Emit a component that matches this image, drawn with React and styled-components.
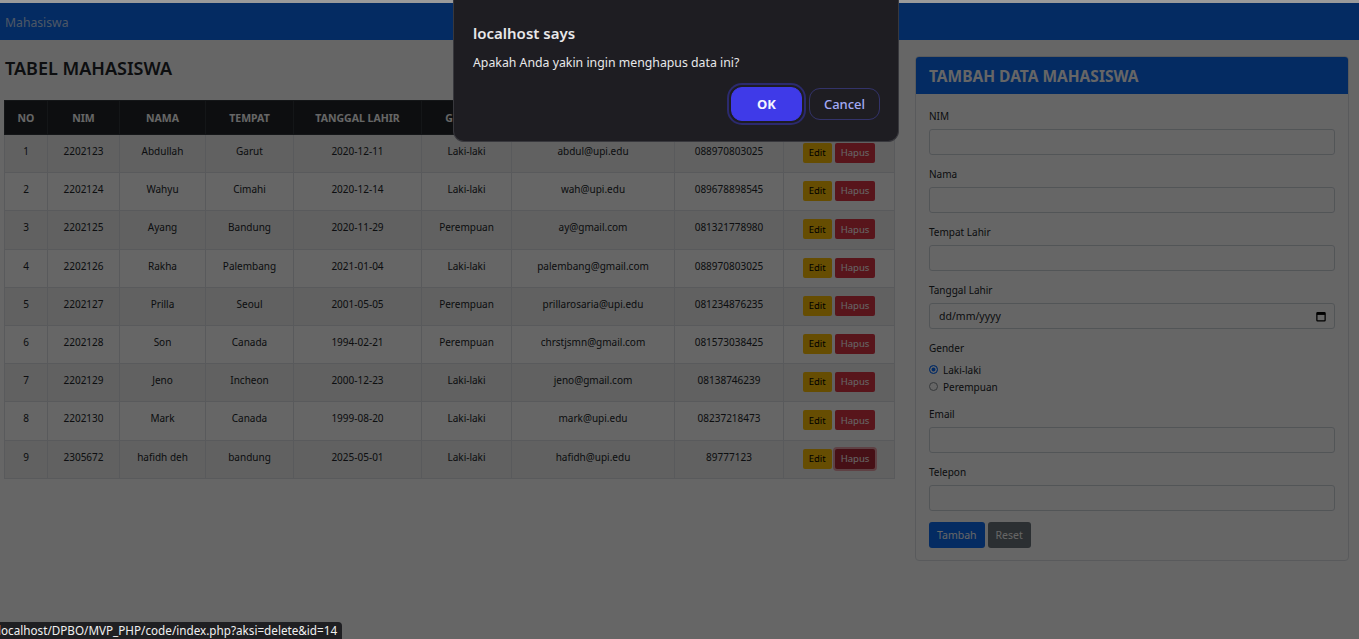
import React from 'react';
import styled, { createGlobalStyle } from 'styled-components';

const GlobalStyle = createGlobalStyle`
  html, body {
    margin: 0;
    padding: 0;
    background: #fff;
    font-family: "Noto Sans", "Open Sans", sans-serif;
    overflow: hidden;
  }
`;

const Page = styled.div`
  position: relative;
  width: 1359px;
  height: 639px;
  background: #fff;
  border-top: 3px solid #9a9a9a;
  box-sizing: border-box;
`;

const Navbar = styled.div`
  height: 37px;
  background: #0a6bf5;
  display: flex;
  align-items: center;
  padding-left: 5px;
`;

const Brand = styled.span`
  color: rgba(255, 255, 255, 0.75);
  font-size: 12.2px;
  margin-top: 2px;
`;

const Main = styled.div`
  display: flex;
  align-items: flex-start;
  padding: 0 10px 0 4px;
  gap: 21px;
`;

const LeftCol = styled.div`
  width: 890px;
`;

const Title = styled.h2`
  margin: 16px 0 0 1px;
  font-size: 18px;
  font-weight: 600;
  color: #212529;
  height: 44px;
  line-height: 24px;
`;

const Table = styled.table`
  width: 891px;
  border-collapse: collapse;
  table-layout: fixed;
  font-size: 10px;
`;

const Th = styled.th`
  width: ${p => p.w - 1}px;
  height: 33px;
  background: #212529;
  color: #fff;
  font-weight: 700;
  font-size: 10.5px;
  border: 1px solid #32383e;
  text-align: center;
  padding: 0;
`;

const Tr = styled.tr`
  background: ${p => (p.odd ? '#f2f2f2' : '#fff')};
`;

const Td = styled.td`
  height: 29.2px;
  border: 1px solid #dee2e6;
  text-align: center;
  color: #212529;
  padding: 8px 0 0;
  vertical-align: top;
  line-height: 16px;
`;

const Actions = styled.div`
  display: flex;
  justify-content: center;
  gap: 3px;
`;

const SmallBtn = styled.span`
  display: inline-flex;
  align-items: center;
  justify-content: center;
  height: 20px;
  padding: 0 6px;
  border-radius: 2px;
  font-size: 9.5px;
  line-height: 1;
  background: ${p => (p.kind === 'edit' ? '#ffc107' : p.active ? '#b02a37' : '#dc3545')};
  color: ${p => (p.kind === 'edit' ? '#000' : '#fff')};
  box-shadow: ${p => (p.active ? '0 0 0 2px rgba(225, 83, 97, 0.5)' : 'none')};
`;

const Card = styled.div`
  width: 434px;
  margin-top: 16px;
  border: 1px solid #dee2e6;
  border-radius: 4px;
  overflow: hidden;
`;

const CardHeader = styled.div`
  height: 37px;
  background: #0a6bf5;
  display: flex;
  align-items: center;
  padding-left: 13px;
  color: #fff;
  font-weight: 700;
  font-size: 15.5px;
`;

const CardBody = styled.div`
  padding: 14px 13px 12px 13px;
`;

const Group = styled.div`
  margin-bottom: 11px;
`;

const Label = styled.div`
  font-size: 10px;
  color: #212529;
  margin-bottom: 5px;
  line-height: 16px;
`;

const Input = styled.div`
  height: 24px;
  border: 1px solid #ced4da;
  border-radius: 3px;
  display: flex;
  align-items: center;
  justify-content: space-between;
  padding: 0 8px 0 9px;
  color: #212529;
  font-size: 10.5px;
`;

const RadioRow = styled.div`
  display: flex;
  align-items: center;
  gap: 5px;
  font-size: 10px;
  color: #212529;
  height: 17px;
`;

const Radio = styled.span`
  width: 7px;
  height: 7px;
  border-radius: 50%;
  border: 1px solid ${p => (p.checked ? '#0d6efd' : '#8a8f94')};
  background: ${p => (p.checked ? '#0d6efd' : '#fff')};
  box-shadow: ${p => (p.checked ? 'inset 0 0 0 1.5px #fff' : 'none')};
`;

const BtnRow = styled.div`
  display: flex;
  gap: 3px;
`;

const FormBtn = styled.span`
  height: 26px;
  padding: 0 8px;
  display: inline-flex;
  align-items: center;
  border-radius: 3px;
  font-size: 10.5px;
  background: ${p => (p.primary ? '#0a6bf5' : '#6c757d')};
  color: #fff;
`;

const Overlay = styled.div`
  position: absolute;
  inset: 0;
  background: rgba(0, 0, 0, 0.6);
`;

const Dialog = styled.div`
  position: absolute;
  left: 453px;
  top: -3px;
  width: 446px;
  height: 142px;
  background: #1e1d22;
  border: 1px solid #38383d;
  border-top: none;
  border-radius: 0 0 11px 11px;
  box-sizing: border-box;
  padding: 22px 18px 0 19px;
`;

const DialogTitle = styled.div`
  color: #e8e8ea;
  font-size: 15px;
  font-weight: 600;
  margin-top: 1px;
`;

const DialogText = styled.div`
  color: #e8e8ea;
  font-size: 12.3px;
  margin-top: 11px;
`;

const DialogActions = styled.div`
  display: flex;
  justify-content: flex-end;
  gap: 7px;
  margin-top: 16px;
`;

const DialogBtn = styled.span`
  height: ${p => (p.primary ? 32 : 30)}px;
  width: 69px;
  border-radius: 11px;
  display: inline-flex;
  align-items: center;
  justify-content: center;
  font-size: 13px;
  font-weight: ${p => (p.primary ? 700 : 500)};
  color: ${p => (p.primary ? '#f4f4ff' : '#a3aaf5')};
  background: ${p => (p.primary ? '#3f3ae8' : 'transparent')};
  border: 1px solid ${p => (p.primary ? '#3f3ae8' : '#33336a')};
  box-shadow: ${p => (p.primary ? '0 0 0 2px #1e1d22, 0 0 0 4px #2b2a6e' : 'none')};
  margin-top: ${p => (p.primary ? 0 : 1)}px;
`;

const StatusBar = styled.div`
  position: absolute;
  left: -2px;
  bottom: 0;
  height: 17px;
  padding: 0 5px 0 0;
  background: #1f1f22;
  border-top-right-radius: 4px;
  color: #f0f0f0;
  font-size: 11.7px;
  line-height: 17px;
`;

const columns = [
  ['NO', 43], ['NIM', 72], ['NAMA', 86], ['TEMPAT', 88], ['TANGGAL LAHIR', 128],
  ['GENDER', 90], ['EMAIL', 163], ['TELEPON', 109], ['AKSI', 111],
];

const rows = [
  ['2202123', 'Abdullah', 'Garut', '2020-12-11', 'Laki-laki', 'abdul@upi.edu', '088970803025'],
  ['2202124', 'Wahyu', 'Cimahi', '2020-12-14', 'Laki-laki', 'wah@upi.edu', '089678898545'],
  ['2202125', 'Ayang', 'Bandung', '2020-11-29', 'Perempuan', 'ay@gmail.com', '081321778980'],
  ['2202126', 'Rakha', 'Palembang', '2021-01-04', 'Laki-laki', 'palembang@gmail.com', '088970803025'],
  ['2202127', 'Prilla', 'Seoul', '2001-05-05', 'Perempuan', 'prillarosaria@upi.edu', '081234876235'],
  ['2202128', 'Son', 'Canada', '1994-02-21', 'Perempuan', 'chrstjsmn@gmail.com', '081573038425'],
  ['2202129', 'Jeno', 'Incheon', '2000-12-23', 'Laki-laki', 'jeno@gmail.com', '08138746239'],
  ['2202130', 'Mark', 'Canada', '1999-08-20', 'Laki-laki', 'mark@upi.edu', '08237218473'],
  ['2305672', 'hafidh deh', 'bandung', '2025-05-01', 'Laki-laki', 'hafidh@upi.edu', '89777123'],
];

function CalendarIcon() {
  return (
    <svg width="10" height="11" viewBox="0 0 14 16">
      <rect x="1" y="2.5" width="12" height="12" rx="1" fill="none" stroke="#000" strokeWidth="1.8" />
      <rect x="1" y="2.5" width="12" height="3.2" fill="#000" />
    </svg>
  );
}

function App() {
  const fields = ['NIM', 'Nama', 'Tempat Lahir'];
  return (
    <Page>
      <GlobalStyle />
      <Navbar>
        <Brand>Mahasiswa</Brand>
      </Navbar>
      <Main>
        <LeftCol>
          <Title>TABEL MAHASISWA</Title>
          <Table>
            <thead>
              <tr>
                {columns.map(([c, w]) => <Th key={c} w={w}>{c}</Th>)}
              </tr>
            </thead>
            <tbody>
              {rows.map((r, i) => (
                <Tr key={r[0]} odd={i % 2 === 0}>
                  <Td>{i + 1}</Td>
                  {r.map((v, j) => <Td key={j}>{v}</Td>)}
                  <Td>
                    <Actions>
                      <SmallBtn kind="edit">Edit</SmallBtn>
                      <SmallBtn kind="hapus" active={i === rows.length - 1}>Hapus</SmallBtn>
                    </Actions>
                  </Td>
                </Tr>
              ))}
            </tbody>
          </Table>
        </LeftCol>
        <Card>
          <CardHeader>TAMBAH DATA MAHASISWA</CardHeader>
          <CardBody>
            {fields.map(f => (
              <Group key={f}>
                <Label>{f}</Label>
                <Input />
              </Group>
            ))}
            <Group>
              <Label>Tanggal Lahir</Label>
              <Input>
                <span>dd/mm/yyyy</span>
                <CalendarIcon />
              </Input>
            </Group>
            <Group>
              <Label>Gender</Label>
              <RadioRow><Radio checked />Laki-laki</RadioRow>
              <RadioRow><Radio />Perempuan</RadioRow>
            </Group>
            <Group>
              <Label>Email</Label>
              <Input />
            </Group>
            <Group>
              <Label>Telepon</Label>
              <Input />
            </Group>
            <BtnRow>
              <FormBtn primary>Tambah</FormBtn>
              <FormBtn>Reset</FormBtn>
            </BtnRow>
          </CardBody>
        </Card>
      </Main>
      <Overlay />
      <Dialog>
        <DialogTitle>localhost says</DialogTitle>
        <DialogText>Apakah Anda yakin ingin menghapus data ini?</DialogText>
        <DialogActions>
          <DialogBtn primary>OK</DialogBtn>
          <DialogBtn>Cancel</DialogBtn>
        </DialogActions>
      </Dialog>
      <StatusBar>localhost/DPBO/MVP_PHP/code/index.php?aksi=delete&amp;id=14</StatusBar>
    </Page>
  );
}

export default App;
